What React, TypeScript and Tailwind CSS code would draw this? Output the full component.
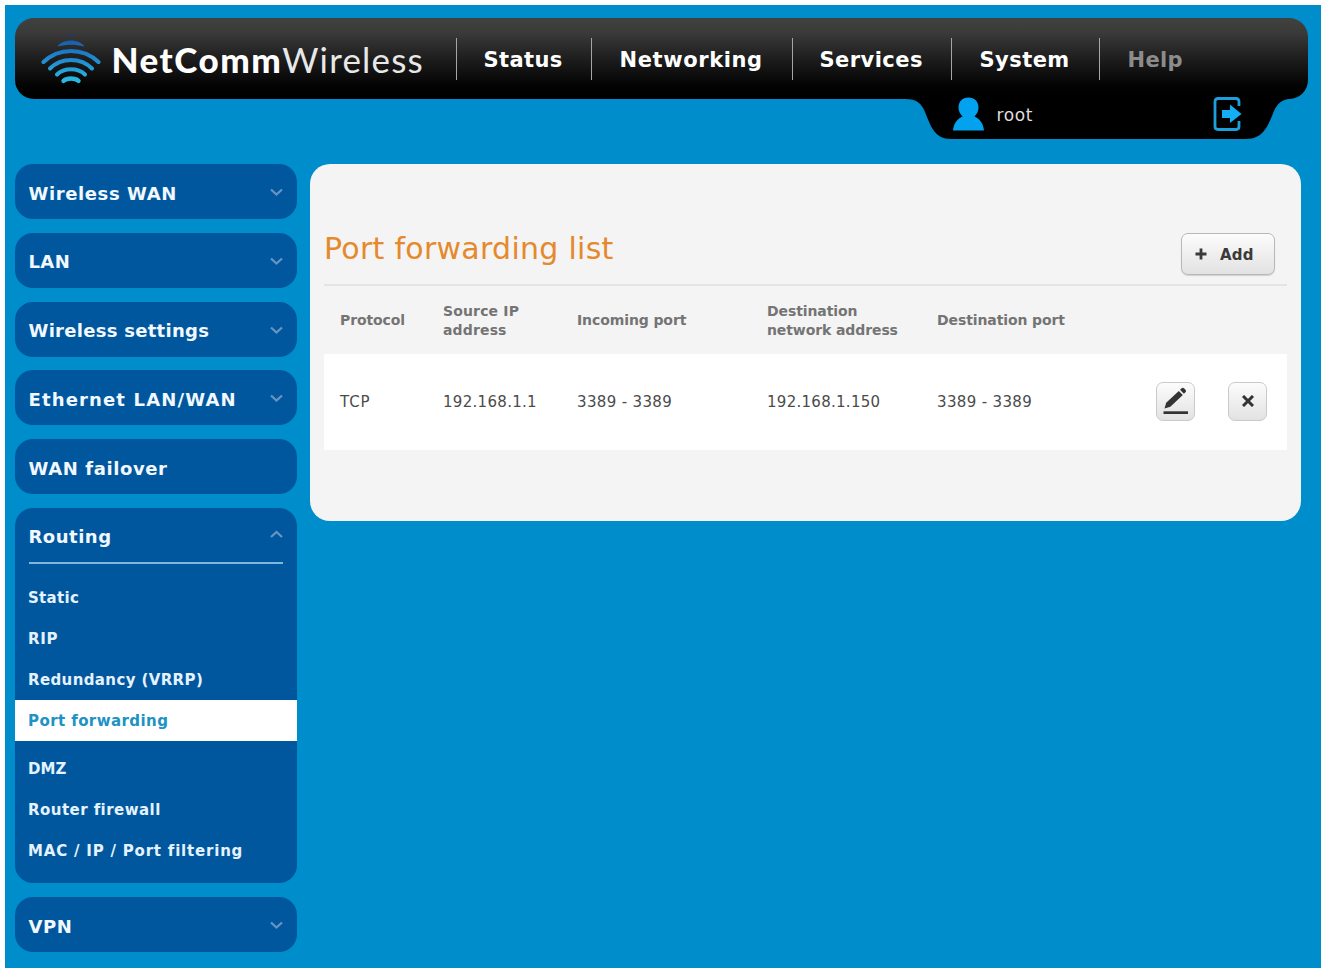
const font = 'font-["DejaVu_Sans",Verdana,sans-serif]';

function Logo() {
  return (
    <svg className="ml-[26px] mt-[15px] h-[52px] w-[60px] shrink-0" viewBox="0 0 60 52" fill="none" strokeLinecap="round">
      <defs>
        <linearGradient id="wave" x1="0" y1="0" x2="0" y2="52" gradientUnits="userSpaceOnUse">
          <stop offset="0" stopColor="#17458f" />
          <stop offset="0.3" stopColor="#1b74c4" />
          <stop offset="1" stopColor="#2cc0e6" />
        </linearGradient>
      </defs>
      <path d="M28 2.200q2-0.800 4 0" stroke="#1b3d70" strokeWidth="1.500" />
      <path d="M16.500 13.500C22 5.500 38 5.500 43.500 13.500C35 11 25 11 16.500 13.500Z" fill="url(#wave)" />
      <path d="M2.500 29C18 14.300 42 14.300 57.500 29" stroke="url(#wave)" strokeWidth="4" />
      <path d="M9 35.500C20 24 40 24 51 35.500" stroke="url(#wave)" strokeWidth="4" />
      <path d="M16 41.500C23 34.500 37 34.500 44 41.500" stroke="url(#wave)" strokeWidth="4" />
      <path d="M22.500 47.800C26 44.800 34 44.800 37.500 47.800" stroke="url(#wave)" strokeWidth="4.400" />
    </svg>
  );
}

function Chevron({ up = false }: { up?: boolean }) {
  return (
    <svg className="h-[9px] w-[13px]" viewBox="0 0 13 9" fill="none" stroke="#6795c2" strokeWidth="2.300">
      <path d={up ? "M1 7L6.500 2L12 7" : "M1 1.500L6.500 6.500L12 1.500"} />
    </svg>
  );
}

const nav = [
  { label: "Status", cell: "w-[135px] pl-[27px] text-white tracking-[0.4px]" },
  { label: "Networking", cell: "w-[201px] pl-[28px] text-white tracking-[0.6px]" },
  { label: "Services", cell: "w-[159px] pl-[27px] text-white tracking-[0.45px]" },
  { label: "System", cell: "w-[148px] pl-[28px] text-white tracking-[0.45px]" },
  { label: "Help", cell: "w-[120px] pl-[28px] text-[#8c8c8c] tracking-[0.3px]" },
];

const topItems = [
  { label: "Wireless WAN", arrow: true, tracking: "tracking-[0.6px]" },
  { label: "LAN", arrow: true, tracking: "tracking-[0.4px]" },
  { label: "Wireless settings", arrow: true, tracking: "tracking-[0.28px]" },
  { label: "Ethernet LAN/WAN", arrow: true, tracking: "tracking-[1.15px]" },
  { label: "WAN failover", arrow: false, tracking: "tracking-[0.6px]" },
];

const routing = [
  { label: "Static", tracking: "tracking-[0.3px]" },
  { label: "RIP", tracking: "tracking-[0.7px]" },
  { label: "Redundancy (VRRP)", tracking: "tracking-[0.38px]" },
  { label: "Port forwarding", tracking: "tracking-[0.42px]", active: true },
  { label: "DMZ", tracking: "tracking-[0px]" },
  { label: "Router firewall", tracking: "tracking-[0.45px]" },
  { label: "MAC / IP / Port filtering", tracking: "tracking-[0.8px]" },
];

function MenuBox({ label, arrow, tracking }: { label: string; arrow: boolean; tracking: string }) {
  return (
    <div className="flex h-[55px] items-center justify-between rounded-[18px] bg-[#00579d] px-[14px] pt-[2px]">
      <span className={`pt-px text-[18px] font-bold text-[#f2f8ff] ${tracking}`}>{label}</span>
      {arrow && <Chevron />}
    </div>
  );
}

function Header() {
  return (
    <header className="relative h-[81px] w-[1293px]">
      <svg className="absolute left-[890px] top-[80px] h-[42px] w-[400px]" viewBox="0 0 400 42">
        <path d="M0 0V1C12 1 16 5 20 14C26 29 30 41 46 41H341C357 41 362 30 367 18C372 5 376 1 390 0Z" fill="#000" />
      </svg>
      <div className="flex h-[81px] rounded-[19px] bg-[linear-gradient(180deg,#41413e_0%,#3a3a3a_18%,#1c1c1c_52%,#020202_85%,#000_100%)]">
        <Logo />
        <div className="ml-[11px] flex w-[344px] items-center whitespace-nowrap pt-px font-[Lato] text-[35px] leading-none text-white">
          <span className="font-black tracking-[1.5px]">NetComm</span>
          <span className="tracking-[1.2px] text-[#e8e8e8]">Wireless</span>
        </div>
        <nav className="mt-5 flex h-[42px]">
          {nav.map((n) => (
            <a key={n.label} className={`flex items-center border-l-[1.5px] border-[#a5a5a5] pt-[3px] text-[21px] font-bold ${n.cell}`}>
              {n.label}
            </a>
          ))}
        </nav>
      </div>
      <div className="absolute left-[938px] top-[78px] flex h-[36px] w-[289px] items-center">
        <svg className="h-[34px] w-[31px]" viewBox="0 0 31 34" fill="#02a2ee">
          <path d="M15.500 0.500C21.500 0.500 25.500 4.500 25.500 10.500C25.500 14.500 23.500 17.500 21.500 19.500C27 22 30.500 27 31 33.500H0C0.500 27 4 22 9.500 19.500C7.500 17.500 5.500 14.500 5.500 10.500C5.500 4.500 9.500 0.500 15.500 0.500Z" />
        </svg>
        <span className="ml-[13px] pt-[3px] text-[17px] tracking-[0.6px] text-[#dedede]">root</span>
        <svg className="ml-auto h-[34px] w-[29px]" viewBox="0 0 29 34" fill="none" stroke="#1c9fdc" strokeWidth="2.800">
          <path d="M26 9V4.500Q26 1.500 23 1.500H5Q2 1.500 2 4.500V29.500Q2 32.500 5 32.500H23Q26 32.500 26 29.500V24" />
          <path d="M9 13H17V7.500L28.500 17L17 26V21H9Z" fill="#12adf3" stroke="none" />
        </svg>
      </div>
    </header>
  );
}

function Sidebar() {
  return (
    <aside className="flex w-[282px] shrink-0 flex-col gap-[13.800px]">
      {topItems.map((i) => (
        <MenuBox key={i.label} {...i} />
      ))}
      <div className="h-[375.500px] rounded-[18px] bg-[#00579d]">
        <div className="mx-[14px] flex h-[56px] items-center justify-between border-b-2 border-[#7fb8dc]">
          <span className="pt-[3px] text-[18px] font-bold tracking-[0.5px] text-[#f2f8ff]">Routing</span>
          <Chevron up />
        </div>
        <ul className="pt-[12.500px]">
          {routing.map((r) => (
            <li
              key={r.label}
              className={`flex h-[41.200px] items-center pl-[13.500px] pt-[2px] text-[15px] font-bold ${r.tracking} ${
                r.active ? "mb-[6px] bg-white text-[#2092c4]" : "text-[#e4f3ff]"
              }`}
            >
              {r.label}
            </li>
          ))}
        </ul>
      </div>
      <MenuBox label="VPN" arrow tracking="tracking-[0.6px]" />
    </aside>
  );
}

const columns = "grid grid-cols-[103px_134px_190px_170px_219px_1fr] items-center pl-[16px]";
const button = "border bg-linear-to-b from-[#fcfcfc] to-[#e2e2e2] text-[#3a3a3a] flex items-center";

function Panel() {
  return (
    <main className="h-[357px] w-[991px] rounded-[20px] bg-[#f4f4f4] pl-[14px] pr-[14px] pt-[69px]">
      <div className="flex h-[53px] items-start justify-between border-b-2 border-[#e3e4e6] pr-3">
        <h1 className="mt-[-2px] text-[30px] leading-9 tracking-[0.28px] text-[#e48a2c]">Port forwarding list</h1>
        <button className={`${button} h-[42px] w-[94px] rounded-[7px] border-[#b8b8b8] pl-[13px] shadow-[0_1px_1px_rgba(0,0,0,0.15)]`}>
          <svg className="mb-px h-3 w-3" viewBox="0 0 12 12" stroke="#3a3a3a" strokeWidth="2.800">
            <path d="M6 0.500V11.500M0.500 6H11.500" />
          </svg>
          <span className="ml-[13px] pt-[2px] text-[15px] font-bold tracking-[0.2px]">Add</span>
        </button>
      </div>
      <div className={`${columns} h-[68px] pt-px text-[14px] font-bold leading-[19px] tracking-[-0.1px] text-[#747474]`}>
        <span>Protocol</span>
        <span className="tracking-[0.15px]">Source IP<br />address</span>
        <span>Incoming port</span>
        <span>Destination<br />network address</span>
        <span>Destination port</span>
      </div>
      <div className={`${columns} h-[96px] bg-white text-[15px] text-[#4b4b4b]`}>
        <span className="pt-px tracking-[0.9px]">TCP</span>
        <span className="pt-px tracking-[0.3px]">192.168.1.1</span>
        <span className="pt-px tracking-[0.35px]">3389 - 3389</span>
        <span className="pt-px tracking-[0.28px]">192.168.1.150</span>
        <span className="pt-px tracking-[0.35px]">3389 - 3389</span>
        <div className="flex gap-[33px] pb-[2px]">
          <button className={`${button} size-[39px] justify-center rounded-[7px] border-[#cacaca]`}>
            <svg className="h-[29px] w-[27px]" viewBox="0 0 27 29" fill="#333">
              <path d="M2.500 21.500L4.200 15.800L16.800 4L20.800 8L8.300 19.800Z" />
              <path d="M18 2.800L20 1Q21 0.300 22.200 1.500L23.500 2.800Q24.500 4 23.700 5L21.900 6.800Z" />
              <path d="M1.500 24.300H26V27H1.500Z" />
            </svg>
          </button>
          <button className={`${button} size-[39px] justify-center rounded-[7px] border-[#cacaca]`}>
            <svg className="h-3 w-3" viewBox="0 0 12 12" stroke="#333" strokeWidth="3">
              <path d="M1 1L11 11M11 1L1 11" />
            </svg>
          </button>
        </div>
      </div>
    </main>
  );
}

export default function App() {
  return (
    <div className={`h-[968px] w-[1323px] overflow-hidden bg-white pl-[5px] pt-[5px] ${font}`}>
      <div className="h-[963px] w-[1316px] bg-[#008dcb] pl-[9.500px] pt-[13px]">
        <Header />
        <div className="mt-[65px] flex items-start gap-[13.500px]">
          <Sidebar />
          <Panel />
        </div>
      </div>
    </div>
  );
}
